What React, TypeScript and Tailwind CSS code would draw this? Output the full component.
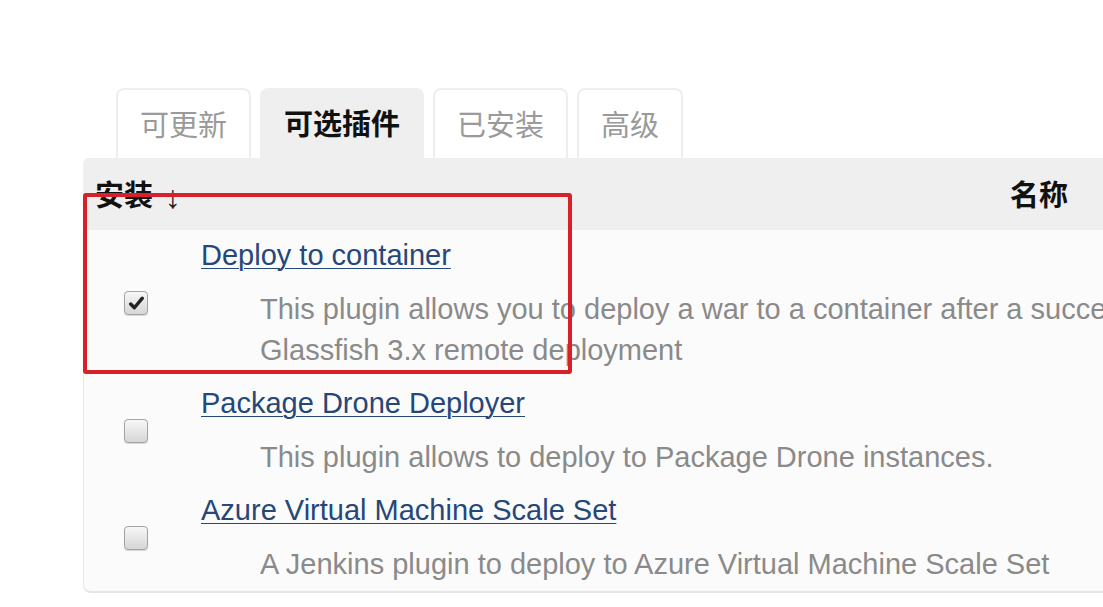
import React from "react";

const font = { fontFamily: '"Liberation Sans", Arial, "Noto Sans CJK SC", sans-serif' };

function Checkbox({ checked }: { checked?: boolean }) {
  return (
    <div className="w-[24px] h-[24px] rounded-[4px] border border-[#a3a3a3] bg-gradient-to-b from-[#f7f7f7] to-[#d6d6d6] shadow-[0_1px_1px_rgba(0,0,0,0.15)] flex items-center justify-center">
      {checked && (
        <svg width="17" height="17" viewBox="0 0 16 16">
          <path d="M2.5 8.5 L6 12 L13.5 3" fill="none" stroke="#222" strokeWidth="3.2" strokeLinecap="round" strokeLinejoin="round" />
        </svg>
      )}
    </div>
  );
}

function Row({
  title,
  lines,
  checked,
  pt,
}: {
  title: string;
  lines: string[];
  checked?: boolean;
  pt: string;
}) {
  return (
    <div className={`flex items-center ${pt}`}>
      <div className="w-[117px] flex justify-start pl-[40px] shrink-0">
        <Checkbox checked={checked} />
      </div>
      <div className="flex flex-col">
        <a className="text-[29px] leading-[41px] text-[#26477a] underline decoration-1 underline-offset-[3px] whitespace-nowrap w-fit">
          {title}
        </a>
        <div className="pl-[59px] mt-[13px] text-[29px] leading-[41px] text-[#8a8a8a] whitespace-nowrap">
          {lines.map((l, i) => (
            <div key={i}>{l}</div>
          ))}
        </div>
      </div>
    </div>
  );
}

export default function App() {
  const tabs = [
    { label: "可更新", active: false },
    { label: "可选插件", active: true },
    { label: "已安装", active: false },
    { label: "高级", active: false },
  ];
  return (
    <div className="relative w-[1103px] h-[607px] overflow-hidden bg-white" style={font}>
      <div className="pt-[88px]">
        <div className="flex gap-[9px] pl-[116px]">
          {tabs.map((t) => (
            <div
              key={t.label}
              className={
                t.active
                  ? "h-[70px] px-[23px] pt-[5px] flex items-center rounded-t-[8px] bg-[#efefef] border border-[#efefef] border-b-0 text-[29px] font-bold text-[#111]"
                  : "h-[70px] px-[22px] pt-[5px] flex items-center rounded-t-[8px] bg-white border-2 border-[#eeeeee] border-b-0 text-[29px] text-[#9a9a9a]"
              }
            >
              {t.label}
            </div>
          ))}
        </div>
        <div className="ml-[83px] w-[1300px]">
          <div className="h-[72px] pt-[6px] bg-[#efefef] rounded-tl-[6px] flex items-center">
            <div className="w-[927px] pl-[12px] flex items-center text-[29px] font-bold text-[#111]">
              安装
              <span className="ml-[12px] font-normal text-[32px] leading-none text-[#222]">↓</span>
            </div>
            <div className="text-[29px] font-bold text-[#111]">名称</div>
          </div>
          <div className="bg-[#fbfbfb] border-l border-b-2 border-[#e6e6e6] rounded-bl-[8px] pb-[2px]">
            <Row
              pt="pt-[5px] pb-[4px]"
              checked
              title="Deploy to container"
              lines={[
                "This plugin allows you to deploy a war to a container after a successful build.",
                "Glassfish 3.x remote deployment",
              ]}
            />
            <Row
              pt="pt-[8px] pb-[4px]"
              title="Package Drone Deployer"
              lines={["This plugin allows to deploy to Package Drone instances."]}
            />
            <Row
              pt="pt-[8px] pb-[4px]"
              title="Azure Virtual Machine Scale Set"
              lines={["A Jenkins plugin to deploy to Azure Virtual Machine Scale Set"]}
            />
          </div>
        </div>
      </div>
      <div className="absolute left-[83px] top-[193px] w-[489px] h-[181px] border-[4px] border-[#d8202b] rounded-[3px]" />
    </div>
  );
}
